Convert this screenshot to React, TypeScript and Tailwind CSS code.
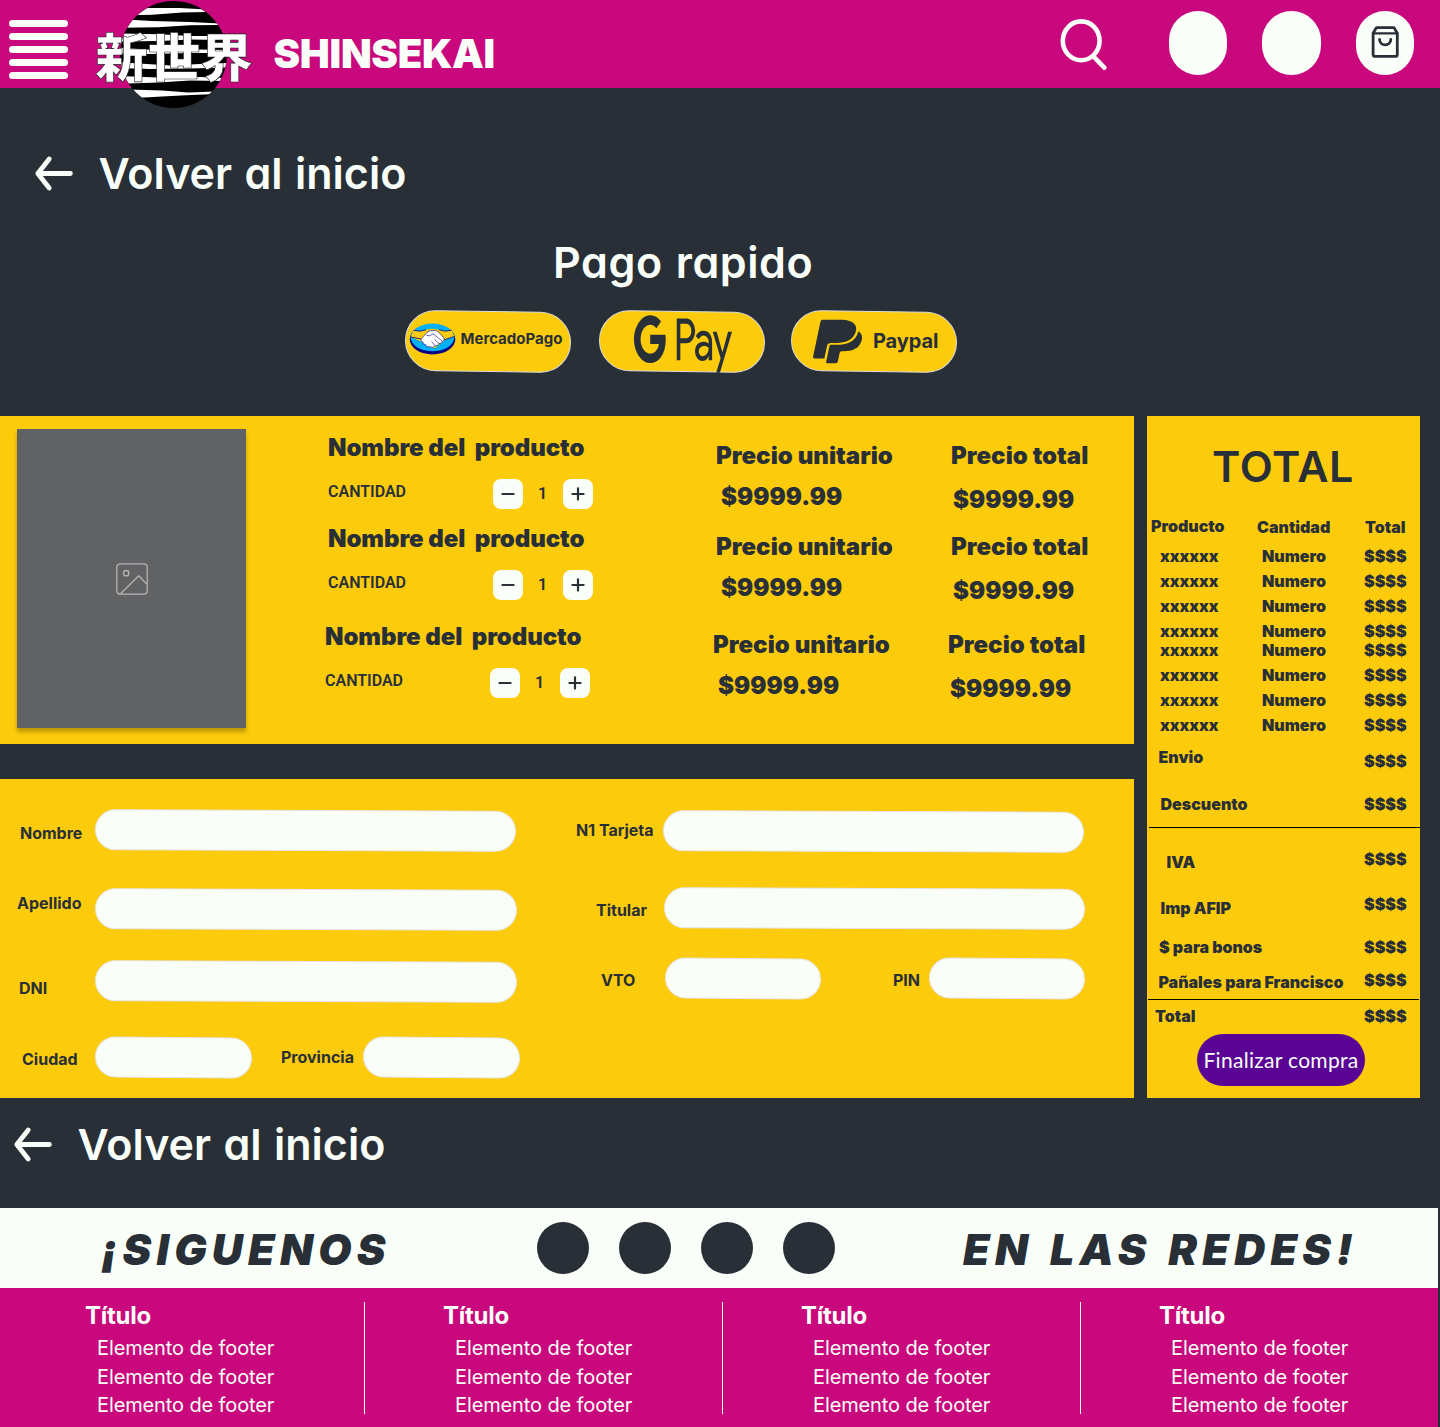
import type { ReactNode } from "react";
import { FaGooglePay, FaPaypal } from "react-icons/fa";

const inter = "font-['Inter',sans-serif]";
const rounded = "font-['Inter','Open_Sans',sans-serif] [font-feature-settings:'cv11']";

function MenuIcon() {
  return (
    <button aria-label="Menú" className="mt-[19.5px] ml-[9.5px] flex w-[59px] flex-col gap-[6px]">
      {[0, 1, 2, 3, 4].map((i) => (
        <span key={i} className="-ml-px block h-[7px] w-full rounded-full bg-[#f9fff8]" />
      ))}
    </button>
  );
}

function Logo() {
  return (
    <svg className="relative z-10 ml-[21.5px] h-[110px] w-[165px] shrink-0" viewBox="0 0 165 110">
      <defs>
        <clipPath id="sun">
          <circle cx="83.5" cy="54.5" r="53.3" />
        </clipPath>
      </defs>
      <circle cx="83.5" cy="54.5" r="53.5" fill="#000" />
      <g clipPath="url(#sun)" fill="#fff">
        <path d="M46 8H90L112 9.3L116 12L92 12.5L62 14.8L40 15.3Z" />
        <path d="M36 19.5L62 21L100 22L130 23.5V25L100 25.2L68 27.3L30 27.8Z" />
        <path d="M28 33.5L70 34.2L100 36L136 36V40L100 39.5L70 41L28 41.5Z" />
        <path d="M28 47.5L80 51L110 49.5L140 50V53L100 53L60 54L28 53.5Z" />
        <path d="M28 62L80 65.5L110 64L140 63V67.5L100 68.5L60 69L28 68Z" />
        <path d="M28 76L80 78L110 77L134 78V81L100 80.5L68 82.5L38 83.5Z" />
        <path d="M38 89.5L72 90.5L98 92.5L126 91.5V94L96 95.3L72 96.5L46 98Z" />
      </g>
      <text
        x="5.2"
        y="76.6"
        fontSize="52.6"
        fontWeight="900"
        fontFamily="'Noto Sans CJK JP', sans-serif"
        fill="#fff"
        stroke="#222"
        strokeWidth="0.6"
      >
        新世界
      </text>
    </svg>
  );
}

function Header() {
  return (
    <header className="flex h-[88px] items-start bg-[#c9087e]">
      <MenuIcon />
      <Logo />
      <span
        className={`${inter} mt-[33px] ml-[18.5px] text-[40px] leading-[41px] font-black tracking-[-0.3px] text-[#f9fff8]`}
      >
        SHINSEKAI
      </span>
      <div className="ml-auto flex items-start pr-[26px]">
        <svg
          className="mt-[18px] mr-[61px] h-[54px] w-[50px]"
          viewBox="0 0 50 54"
          fill="none"
          stroke="#f9fff8"
          strokeWidth="4.6"
          strokeLinecap="round"
        >
          <ellipse cx="23.2" cy="22.8" rx="18.4" ry="19.4" />
          <path d="M35.5 38.5L46.3 49.6" />
        </svg>
        <span className="mt-[11px] h-16 w-[58px] rounded-full bg-[#f9fff8]" />
        <span className="mt-[11px] ml-[35px] h-16 w-[59px] rounded-full bg-[#f9fff8]" />
        <span className="mt-[11px] ml-[35px] flex h-16 w-[58px] justify-center rounded-full bg-[#f9fff8]">
          <svg
            className="mt-[14px] h-[34px] w-[30px]"
            viewBox="0 0 30 34"
            fill="none"
            stroke="#292f36"
            strokeWidth="2.8"
            strokeLinecap="round"
            strokeLinejoin="round"
          >
            <path d="M3.1 8.2L6.4 2.6H24L27.3 8.2V29.4Q27.3 31.4 25.3 31.4H5.1Q3.1 31.4 3.1 29.4Z" />
            <path d="M3.1 8.4H27.3" strokeWidth="2.2" />
            <path d="M9.6 14.5C9.6 21.6 20.8 21.6 20.8 14.5" />
          </svg>
        </span>
      </div>
    </header>
  );
}

function BackLink({ className }: { className: string }) {
  return (
    <a className={`flex h-[51px] items-center text-[#f9fff8] ${className}`}>
      <svg
        className="h-[37px] w-[39px]"
        viewBox="0 0 39 37"
        fill="none"
        stroke="currentColor"
        strokeWidth="4.8"
        strokeLinecap="round"
        strokeLinejoin="round"
      >
        <path d="M36.4 18.5H3.8M15.2 4L3.8 18.5L15.2 33" />
      </svg>
      <span
        className={`${rounded} ml-[25.5px] text-[43px] leading-[51px] font-semibold tracking-[0.02px] [word-spacing:1.5px]`}
      >
        Volver al inicio
      </span>
    </a>
  );
}

function MercadoPagoIcon() {
  return (
    <svg className="h-[33px] w-[47px]" viewBox="0 0 47 33">
      <ellipse cx="23.5" cy="17.3" rx="22.8" ry="15.2" fill="#0a0080" />
      <ellipse cx="23.5" cy="15.4" rx="21.8" ry="13.8" fill="#00b1f8" />
      <path
        d="M4.5 8.3Q12 10.5 17.5 7.5Q23 6 29 7.5Q36 10 42.5 8.3L45.2 14.5L36 18L31 22L26 26L20 25L13 20L1.8 15Z"
        fill="#fccb0b"
      />
      <path
        d="M4.5 8.3Q11 10.3 17 7.8M42.5 8.3Q36 10.3 30 7.8M1.8 15L12 17M45.2 14.5L35 18"
        fill="none"
        stroke="#0a0080"
        strokeWidth="0.8"
      />
      <path
        d="M12 17L18 10.5Q20 8.2 23 8.6Q27 7.6 29.5 10L34.5 15.5Q36.5 18 33.5 19Q33 22 30 21.5Q29 24.5 26 23.8Q24 26.5 21 24.8Q17 25.5 16.5 22.5Q13.5 23 14 20Q11 19.5 12 17Z"
        fill="#fff"
        stroke="#0a0080"
        strokeWidth="0.6"
      />
      <path
        d="M17.5 13.5Q21 14.8 24 11.8L33 18.8M25.5 17.5L30 21.5M22.5 19.5L26 23.5"
        fill="none"
        stroke="#0a0080"
        strokeWidth="0.6"
      />
    </svg>
  );
}

function PayButton({ children, className = "" }: { children: ReactNode; className?: string }) {
  return (
    <button className={`grid h-[61px] w-[166px] grid-rows-[61px] ${className}`}>
      <span className="col-start-1 row-start-1 h-full w-full skew-y-[0.75deg] rounded-[31px] border border-[#dcdcdc] bg-[#fccb0b]" />
      <span className="relative col-start-1 row-start-1 flex h-full w-full items-start text-[#292f36]">{children}</span>
    </button>
  );
}

function QuickPay() {
  return (
    <section>
      <h2
        className={`${rounded} mt-[38px] ml-[553px] text-[43px] leading-[51px] font-semibold tracking-[0.6px] text-[#f9fff8] [word-spacing:1.5px]`}
      >
        Pago rapido
      </h2>
      <div className="mt-[23px] ml-[405px] flex">
        <PayButton>
          <span className="mt-[11px] ml-[4px]">
            <MercadoPagoIcon />
          </span>
          <span className={`${inter} mt-[18px] ml-[4.5px] text-[15px] leading-5 font-bold`}>MercadoPago</span>
        </PayButton>
        <PayButton className="ml-[28px]">
          <FaGooglePay className="mt-[-24px] ml-[35px] h-[114px] w-[98px] shrink-0" preserveAspectRatio="none" />
        </PayButton>
        <PayButton className="ml-[26px]">
          <FaPaypal className="mt-[6px] ml-[22px] h-[49px] w-[49px]" preserveAspectRatio="none" />
          <span className={`${inter} mt-[20px] ml-[11px] text-[20px] leading-5 font-bold tracking-[-0.1px]`}>Paypal</span>
        </PayButton>
      </div>
    </section>
  );
}

function StepButton({ plus = false }: { plus?: boolean }) {
  return (
    <button className="flex size-[30px] items-center justify-center rounded-[8px] bg-[#f9fff8]">
      <svg className="size-[14px]" viewBox="0 0 14 14" stroke="#292f36" strokeWidth="2.2" strokeLinecap="round">
        <path d={plus ? "M1.4 7H12.6M7 1.4V12.6" : "M1.4 7H12.6"} />
      </svg>
    </button>
  );
}

function ProductRow({ className }: { className: string }) {
  return (
    <div className={`${inter} flex h-[75px] text-[24px] leading-6 font-black tracking-[0.05px] text-[#292f36] ${className}`}>
      <div className="w-[388px]">
        <p className="whitespace-pre tracking-[-0.05px]">Nombre del  producto</p>
        <div className="mt-[19px] flex h-[30px] items-center">
          <span className="mb-[5px] w-[165px] font-['Roboto',sans-serif] text-[16px] font-semibold tracking-normal">
            CANTIDAD
          </span>
          <StepButton />
          <span className="w-10 pr-px text-center font-['Roboto',sans-serif] text-[16px] font-semibold tracking-normal">
            1
          </span>
          <StepButton plus />
        </div>
      </div>
      <div className="w-[235px] pt-[8px]">
        <p>Precio unitario</p>
        <p className="mt-[17px] ml-[5px]">$9999.99</p>
      </div>
      <div className="pt-[8px]">
        <p>Precio total</p>
        <p className="mt-[20px] ml-[2px]">$9999.99</p>
      </div>
    </div>
  );
}

function Products() {
  return (
    <section className="flex h-[328px] bg-[#fccb0b]">
      <div className="mt-[13px] ml-[17px] flex h-[299px] w-[229px] items-center justify-center bg-[#616264] shadow-[0_4px_4px_rgba(0,0,0,0.25)]">
        <svg className="size-[34px]" viewBox="0 0 34 34" fill="none" stroke="#b5b5b6" strokeWidth="1.3" strokeLinejoin="round">
          <rect x="1.8" y="1.8" width="30.4" height="30.4" rx="3.4" />
          <circle cx="11.2" cy="11.2" r="2.7" />
          <path d="M5.5 31.8L23.8 13.8L31.8 22.2" />
        </svg>
      </div>
      <div className="pt-5">
        <ProductRow className="ml-[82px]" />
        <ProductRow className="mt-4 ml-[82px]" />
        <ProductRow className="mt-[23px] ml-[79px]" />
      </div>
    </section>
  );
}

function Field({
  label,
  labelClass,
  inputClass,
}: {
  label: string;
  labelClass: string;
  inputClass: string;
}) {
  return (
    <label className="flex h-[41px] items-start">
      <span className={`shrink-0 whitespace-nowrap leading-[41px] ${labelClass}`}>{label}</span>
      <input className={`h-[41px] shrink-0 rounded-[21px] border border-[#e6e3e6] bg-[#f9fff8] ${inputClass}`} />
    </label>
  );
}

function PaymentForm() {
  return (
    <section className={`${inter} mt-[35px] flex h-[319px] bg-[#fccb0b] text-[16px] font-bold text-[#292f36]`}>
      <div className="w-[575px] pt-[31px]">
        <Field label="Nombre" labelClass="w-[95px] pl-[20px] mt-[3px]" inputClass="w-[421px] skew-y-[0.2deg]" />
        <div className="mt-[38px]">
          <Field label="Apellido" labelClass="w-[95px] pl-[17px] mt-[-6px]" inputClass="w-[422px] skew-y-[0.2deg]" />
        </div>
        <div className="mt-[31px]">
          <Field label="DNI" labelClass="w-[95px] pl-[19px] mt-[7px]" inputClass="w-[422px] skew-y-[0.2deg]" />
        </div>
        <div className="mt-[35px] flex">
          <Field label="Ciudad" labelClass="w-[95px] pl-[22px] mt-[2px]" inputClass="w-[157px] skew-y-[0.5deg]" />
          <Field label="Provincia" labelClass="w-[111px] pl-[29px]" inputClass="w-[157px] skew-y-[0.5deg]" />
        </div>
      </div>
      <div className="pt-[32px]">
        <Field label="N1 Tarjeta" labelClass="w-[88px] pl-px mt-[-1px]" inputClass="w-[421px] skew-y-[0.2deg]" />
        <div className="mt-[36px]">
          <Field label="Titular" labelClass="w-[89px] pl-[21px] mt-[2px]" inputClass="w-[421px] skew-y-[0.2deg]" />
        </div>
        <div className="mt-[29px] flex">
          <Field label="VTO" labelClass="w-[90px] pl-[26px] mt-[2px]" inputClass="w-[156px] skew-y-[0.5deg]" />
          <Field label="PIN" labelClass="w-[108px] pl-[72px] mt-[2px]" inputClass="w-[156px] skew-y-[0.5deg]" />
        </div>
      </div>
    </section>
  );
}

const itemHeights = [
  "h-[25px]",
  "h-[25px]",
  "h-[25px]",
  "h-[19px]",
  "h-[25px]",
  "h-[25px]",
  "h-[25px]",
  "h-[25px]",
];

function SummaryLine({
  label,
  row,
  labelClass,
  valueClass = "",
}: {
  label: string;
  row: string;
  labelClass: string;
  valueClass?: string;
}) {
  return (
    <div className={`flex items-start leading-5 ${row}`}>
      <span className={`w-[217px] whitespace-nowrap ${labelClass}`}>{label}</span>
      <span className={valueClass}>$$$$</span>
    </div>
  );
}

function Summary() {
  return (
    <aside
      className={`${inter} ml-[13px] h-[682px] w-[273px] bg-[#fccb0b] pt-[28px] text-[16px] font-black text-[#292f36]`}
    >
      <h2 className={`${rounded} pl-[65px] text-[43px] leading-[44px] font-semibold tracking-[0.6px]`}>TOTAL</h2>
      <div className="mt-[27px] flex leading-6">
        <span className="mt-[-1px] w-[107px] pl-[4px]">Producto</span>
        <span className="w-[111px] pl-[3px]">Cantidad</span>
        <span>Total</span>
      </div>
      <div className="mt-[5px]">
        {itemHeights.map((h, i) => (
          <div key={i} className={`flex leading-[25px] ${h}`}>
            <span className="w-[115px] pl-[13px]">xxxxxx</span>
            <span className="w-[102px]">Numero</span>
            <span>$$$$</span>
          </div>
        ))}
      </div>
      <SummaryLine label="Envio" row="h-[56px]" labelClass="mt-[9px] pl-[11.5px]" valueClass="mt-[13px]" />
      <SummaryLine label="Descuento" row="h-[33px]" labelClass="pl-[13.5px]" />
      <hr className="ml-[2px] h-px border-0 bg-black" />
      <SummaryLine label="IVA" row="h-[70px]" labelClass="mt-[24px] pl-[19.5px]" valueClass="mt-[21px]" />
      <SummaryLine label="Imp AFIP" row="h-[39px]" labelClass="pl-[13.5px]" valueClass="mt-[-4px]" />
      <SummaryLine label="$ para bonos" row="h-[35px]" labelClass="pl-[12px]" />
      <SummaryLine label="Pañales para Francisco" row="h-[27px]" labelClass="pl-[11.5px]" valueClass="mt-[-2px]" />
      <hr className="mr-px ml-px h-px border-0 bg-black" />
      <SummaryLine label="Total" row="h-[34px]" labelClass="mt-[6px] pl-[8px]" valueClass="mt-[6px]" />
      <button className="ml-[50px] flex h-[52px] w-[168px] items-center justify-center rounded-full bg-[#590494] font-['Lato',sans-serif] text-[21px] font-normal tracking-[0.3px] whitespace-nowrap text-[#f9fff8]">
        Finalizar compra
      </button>
    </aside>
  );
}

function SocialBand() {
  const title = `${rounded} mt-[3px] text-[43px] leading-[51px] font-black italic whitespace-nowrap`;
  return (
    <section className="mt-[38px] flex h-20 w-[1438px] items-center bg-[#f9fff8] text-[#292f36]">
      <span className={`${title} w-[437px] pl-[101px] tracking-[5.2px]`}>¡SIGUENOS</span>
      <div className="ml-[100px] flex gap-[30px]">
        {[0, 1, 2, 3].map((i) => (
          <span key={i} className="size-[52px] rounded-full bg-[#292f36]" />
        ))}
      </div>
      <span className={`${title} ml-[128px] tracking-[5.2px] [word-spacing:3px]`}>EN LAS REDES!</span>
    </section>
  );
}

function Footer() {
  return (
    <footer className={`${rounded} flex h-[139px] w-[1438px] bg-[#c9087e] pt-[14px] pl-[7px] text-[#f9fff8]`}>
      {[0, 1, 2, 3].map((i) => (
        <div key={i} className="h-[112px] w-[358px] shrink-0 border-r border-[#f9fff8] pl-[78px] last:border-0">
          <h3 className="pt-[2px] text-[24px] leading-6 font-bold tracking-[-0.25px]">Título</h3>
          <ul className="mt-[6px] pl-[12px] text-[20px] leading-[28.5px] tracking-[-0.12px]">
            <li>Elemento de footer</li>
            <li>Elemento de footer</li>
            <li>Elemento de footer</li>
          </ul>
        </div>
      ))}
    </footer>
  );
}

export default function App() {
  return (
    <div className="h-[1427px] w-[1440px] overflow-hidden bg-[#292f36]">
      <Header />
      <BackLink className="mt-[60px] ml-[34px]" />
      <QuickPay />
      <main className="mt-[44px] flex">
        <div className="w-[1134px]">
          <Products />
          <PaymentForm />
        </div>
        <Summary />
      </main>
      <BackLink className="mt-[21px] ml-[13px]" />
      <SocialBand />
      <Footer />
    </div>
  );
}
